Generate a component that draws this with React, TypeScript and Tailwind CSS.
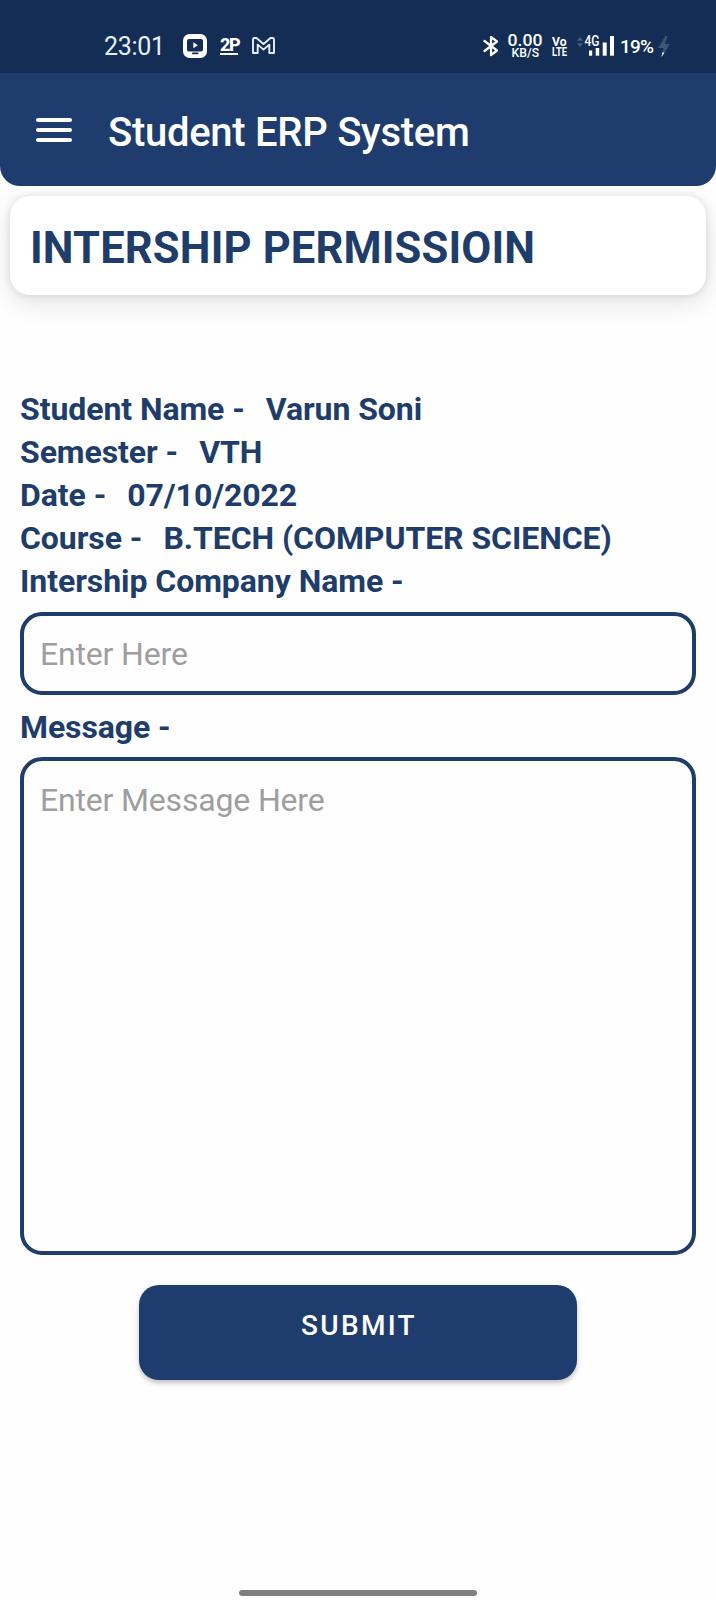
import { useState } from "react";

function StatusBar() {
  return (
    <div className="flex h-[73px] items-start justify-between bg-[#132d55] pt-[30px] pr-[45px] pl-[104px] text-white">
      <div className="flex h-8 items-center">
        <span className="w-[79px] pt-px text-[25px] leading-8 font-normal tracking-[-0.300px] text-[#e6f0fa]">23:01</span>
        <svg className="h-8 w-6" viewBox="0 0 24 32">
          <rect x="0" y="4" width="24" height="24" rx="6.5" fill="#fff" />
          <rect x="4" y="9" width="16" height="12.5" rx="2" fill="#132d55" />
          <path d="M10.300 12.300v6l4.500-3z" fill="#fff" />
          <rect x="9" y="22.600" width="6.500" height="1.600" rx=".8" fill="#132d55" />
        </svg>
        <span className="ml-[13px] flex w-[32px] flex-col">
          <span className="h-[16px] text-[18px] leading-[15px] font-extrabold tracking-[-1.300px]">2P</span>
          <span className="h-[1.500px] w-[18px] bg-white" />
        </span>
        <svg className="h-8 w-[23px]" viewBox="0 0 23 32" fill="none" stroke="#e6f0fa" strokeWidth="1.900" strokeLinejoin="round">
          <path d="M1 9.500Q1 8 2.500 8H4.500L11.500 14L18.500 8H20.500Q22 8 22 9.500V23H17.300V14.600L11.500 19.600L5.700 14.600V23H1Z" />
        </svg>
      </div>
      <div className="flex h-8 items-center">
        <svg className="h-8 w-4" viewBox="0 0 16 32" fill="none" stroke="#fff" strokeWidth="2.200" strokeLinejoin="round" strokeLinecap="round">
          <path d="M1.500 11L14 20.500L8 25V7L14 11.500L1.500 21" />
        </svg>
        <svg className="ml-[8px] h-8 w-[36px]" viewBox="0 0 36 32" fill="#fff" fontWeight="500">
          <text x="0.500" y="16.300" fontSize="17" textLength="35" lengthAdjust="spacingAndGlyphs">0.00</text>
          <text x="4.500" y="27" fontSize="12" textLength="27.500" lengthAdjust="spacingAndGlyphs">KB/S</text>
        </svg>
        <svg className="ml-[7px] h-8 w-[20px]" viewBox="0 0 20 32" fill="#fff" fontWeight="700">
          <text x="2" y="15.600" fontSize="13" textLength="14.500" lengthAdjust="spacingAndGlyphs">Vo</text>
          <text x="2" y="26" fontSize="12.500" textLength="15" lengthAdjust="spacingAndGlyphs">LTE</text>
        </svg>
        <svg className="ml-[6px] h-8 w-[39px]" viewBox="0 0 39 32" fill="#fff">
          <path d="M1 10.800L4 7L7 10.800ZM1 13.200L4 17L7 13.200Z" fill="#4a6082" />
          <text x="8.500" y="16" fontSize="14.500" fontWeight="500" textLength="15" lengthAdjust="spacingAndGlyphs">4G</text>
          <rect x="13" y="20.500" width="3.200" height="5.200" />
          <rect x="19.700" y="18" width="3.500" height="7.700" />
          <rect x="26.700" y="12.500" width="4" height="13.200" />
          <rect x="34" y="6" width="4" height="19.700" />
        </svg>
        <span className="ml-[5px] w-[37px] pt-px text-[19px] leading-8 font-medium tracking-[-0.800px]">19%</span>
        <svg className="h-8 w-[14px]" viewBox="0 0 14 32" fill="#3e5576">
          <path d="M8.500 6L1 18H6.500L4.500 27L13 14H8L10.500 6Z" />
          <path d="M5.400 22.500L4.500 27L7.500 22.500Z" fill="#fff" />
        </svg>
      </div>
    </div>
  );
}

function AppHeader() {
  return (
    <header className="flex h-[113px] items-center rounded-b-[20px] bg-[#1e3d6e] pl-9 text-white">
      <button aria-label="Menu" className="flex w-9 flex-col gap-[6px]">
        <span className="h-1 rounded-[2px] bg-white" />
        <span className="h-1 rounded-[2px] bg-white" />
        <span className="h-1 rounded-[2px] bg-white" />
      </button>
      <h1 className="ml-9 pt-[6px] text-[40px] leading-[48px] font-medium tracking-[-0.280px]">Student ERP System</h1>
    </header>
  );
}

const details = [
  { label: "Student Name", value: "Varun Soni" },
  { label: "Semester", value: "VTH" },
  { label: "Date", value: "07/10/2022" },
  { label: "Course", value: "B.TECH (COMPUTER SCIENCE)" },
];

export default function App() {
  const [company, setCompany] = useState("");
  const [message, setMessage] = useState("");

  return (
    <div className="flex h-[1600px] w-[716px] flex-col bg-[#fefefe] font-['Roboto',sans-serif] text-[#1e3d6b]">
      <StatusBar />
      <AppHeader />
      <section className="mx-[10px] mt-[10px] flex h-[99px] items-center rounded-[20px] bg-white pt-[6px] pl-5 shadow-[0_8px_24px_rgba(0,0,0,0.11),0_0_8px_rgba(0,0,0,0.11)]">
        <h2 className="text-[43.500px] leading-[50px] font-bold tracking-[0.150px]">INTERSHIP PERMISSIOIN</h2>
      </section>

      <main className="mt-[92px] flex flex-col px-5">
        {details.map((d) => (
          <p key={d.label} className="flex h-[43px] items-center gap-[21px] text-[32px] font-bold tracking-[-0.070px]">
            <span>{d.label} -</span>
            <span>{d.value}</span>
          </p>
        ))}
        <label htmlFor="company" className="flex h-[43px] items-center text-[32px] font-bold tracking-[-0.060px]">
          Intership Company Name -
        </label>
        <input
          id="company"
          value={company}
          onChange={(e) => setCompany(e.target.value)}
          placeholder="Enter Here"
          className="mt-[10px] h-[83px] w-full rounded-[22px] border-4 border-[#1e3d6b] bg-transparent px-4 text-[32px] tracking-[-0.170px] outline-none placeholder:text-[#9e9e9e]"
        />
        <label htmlFor="message" className="mt-[10px] flex h-[43px] items-center text-[32px] font-bold tracking-[-0.100px]">
          Message -
        </label>
        <textarea
          id="message"
          value={message}
          onChange={(e) => setMessage(e.target.value)}
          placeholder="Enter Message Here"
          className="mt-[9px] h-[498px] w-full resize-none rounded-[22px] border-4 border-[#1e3d6b] bg-transparent px-4 py-[19px] text-[32px] leading-[40px] tracking-[-0.170px] outline-none placeholder:text-[#9e9e9e]"
        />
        <button className="mt-[30px] flex h-[95px] w-[438px] justify-center self-center rounded-[20px] bg-[#1e3d6e] pt-[24px] pl-[2px] text-[28px] leading-[34px] font-medium tracking-[2.300px] text-white shadow-[0_3px_5px_rgba(0,0,0,0.24)]">
          SUBMIT
        </button>
      </main>

      <div className="mt-auto mb-1 ml-[239px] h-[6px] w-[238px] rounded-full bg-[#7f7f7f]" />
    </div>
  );
}
